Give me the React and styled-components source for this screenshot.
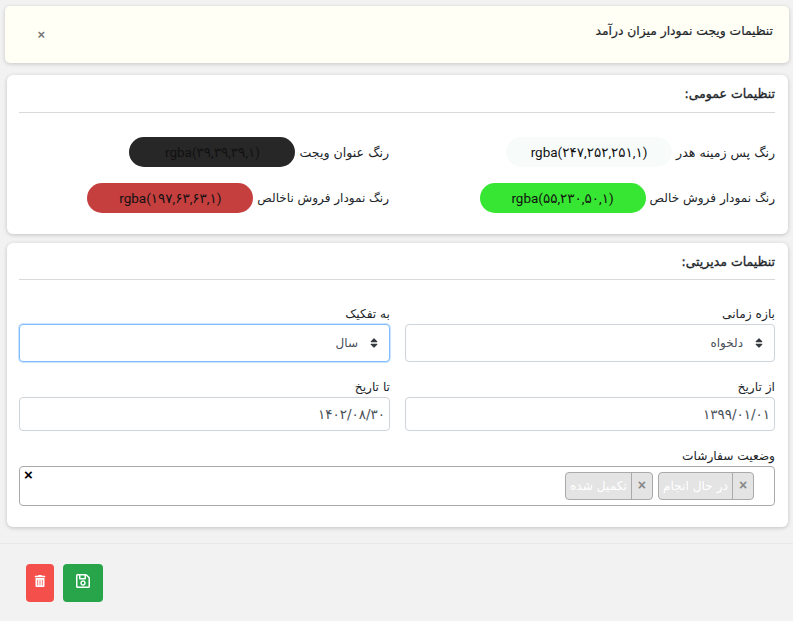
import styled, { createGlobalStyle } from "styled-components";
import { FaRegSave, FaTrashAlt, FaSort } from "react-icons/fa";

const GlobalStyle = createGlobalStyle`
  html, body {
    margin: 0;
    padding: 0;
    background: #f2f2f2;
    font-family: "DejaVu Sans", "Noto Sans", sans-serif;
    color: #212529;
  }
  * { box-sizing: border-box; }
`;

const Page = styled.div`
  width: 793px;
  height: 621px;
  overflow: hidden;
  direction: rtl;
  padding-top: 6px;
`;

const Header = styled.div`
  height: 57px;
  margin: 0 4px 12px 5px;
  padding: 17px 16px 0 16px;
  background: #fffff6;
  border-radius: 5px;
  box-shadow: 0 1px 4px rgba(0, 0, 0, 0.18);
  display: flex;
  justify-content: space-between;
  align-items: flex-start;
`;

const HeaderTitle = styled.h1`
  margin: 0;
  font-size: 12.3px;
  line-height: 16px;
  font-weight: 400;
  -webkit-text-stroke: 0.2px #212529;
  color: #212529;
`;

const CloseIcon = styled.span`
  margin: 5px 0 0 16px;
  width: 8px;
  font-family: "Liberation Sans", sans-serif;
  font-size: 13px;
  line-height: 14px;
  font-weight: 700;
  color: #777;
`;

const Card = styled.section`
  margin: 0 5px ${(p) => p.$gap}px 7px;
  height: ${(p) => p.$height}px;
  padding: 0 13px 0 12px;
  background: #fff;
  border-radius: 6px;
  box-shadow: 0 1px 4px rgba(0, 0, 0, 0.2);
`;

const CardTitle = styled.h2`
  margin: 0;
  height: ${(p) => p.$height}px;
  padding-top: 10px;
  font-size: 12.5px;
  line-height: 18px;
  font-weight: 400;
  -webkit-text-stroke: 0.35px #212529;
  color: #212529;
  border-bottom: 1px solid #d9d9d9;
`;

const ColorGrid = styled.div`
  display: grid;
  grid-template-columns: 370px 370px;
  justify-content: space-between;
  row-gap: 16px;
  padding-top: 24px;
`;

const ColorRow = styled.div`
  display: flex;
  align-items: center;
  gap: 4px;
  height: 30px;
`;

const ColorLabel = styled.span`
  font-size: ${(p) => p.$size}px;
  color: #212529;
  white-space: nowrap;
`;

const ColorPill = styled.div`
  direction: ltr;
  width: 166px;
  height: 30px;
  border-radius: 15px;
  background: ${(p) => p.$bg};
  color: #111;
  font-family: "Roboto", "DejaVu Sans", sans-serif;
  font-size: 13.5px;
  line-height: 30px;
  text-align: center;
`;

const FormGrid = styled.div`
  display: grid;
  grid-template-columns: 370px 371px;
  justify-content: space-between;
  padding-top: 24px;
  row-gap: 15px;
`;

const Field = styled.div`
  display: flex;
  flex-direction: column;
  grid-column: ${(p) => (p.$wide ? "1 / -1" : "auto")};
`;

const FieldLabel = styled.label`
  height: 20px;
  font-size: 12.2px;
  line-height: 20px;
  color: #212529;
`;

const SelectBox = styled.div`
  height: 38px;
  display: flex;
  align-items: center;
  gap: 10px;
  padding-right: 9px;
  background: #fff;
  border: 1px solid ${(p) => (p.$focused ? "#80bdff" : "#ced4da")};
  border-radius: 4px;
  box-shadow: ${(p) => (p.$focused ? "0 0 0 1px rgba(0, 123, 255, 0.2)" : "none")};
  font-size: 12px;
  color: #495057;

  svg {
    width: 12px;
    height: 12px;
    color: #343a40;
  }
`;

const DateInput = styled.div`
  height: 34px;
  display: flex;
  align-items: center;
  padding-right: 4px;
  background: #fff;
  border: 1px solid #ced4da;
  border-radius: 4px;
  font-size: 13.5px;
  color: #495057;
`;

const MultiSelect = styled.div`
  position: relative;
  height: 40px;
  display: flex;
  gap: 5px;
  padding: 5px 20px 0 0;
  background: #fff;
  border: 1px solid #aaa;
  border-radius: 4px;
`;

const Tag = styled.div`
  height: 28px;
  display: flex;
  align-items: center;
  background: #e4e4e4;
  border: 1px solid #aaa;
  border-radius: 4px;
  color: #fff;
  font-size: 12.2px;
  white-space: nowrap;
`;

const TagRemove = styled.span`
  width: 21px;
  height: 100%;
  border-left: 1px solid #aaa;
  font-family: "Liberation Sans", sans-serif;
  font-size: 14px;
  font-weight: 700;
  line-height: 25px;
  text-align: center;
  color: #888;
`;

const TagText = styled.span`
  padding: 0 4px;
`;

const ClearAll = styled.span`
  position: absolute;
  left: 4px;
  top: 0;
  font-family: "Liberation Sans", sans-serif;
  font-size: 15px;
  line-height: 15px;
  font-weight: 700;
  color: #000;
`;

const Footer = styled.footer`
  margin-top: 16px;
  border-top: 1px solid #e8e8e8;
  padding: 20px 0 0 26px;
  display: flex;
  direction: ltr;
  gap: 9px;
`;

const ActionButton = styled.button`
  width: ${(p) => p.$width}px;
  height: 38px;
  padding: 0 0 4px;
  border: none;
  border-radius: 4px;
  background: ${(p) => p.$bg};
  color: #fff;
  display: flex;
  align-items: center;
  justify-content: center;
  font-size: ${(p) => p.$iconSize}px;
`;

const colors = [
  { label: "رنگ پس زمینه هدر", size: 12.6, value: "rgba(۲۴۷,۲۵۲,۲۵۱,۱)", bg: "rgba(247,252,251,1)" },
  { label: "رنگ عنوان ویجت", size: 12.6, value: "rgba(۳۹,۳۹,۳۹,۱)", bg: "rgba(39,39,39,1)" },
  { label: "رنگ نمودار فروش خالص", size: 12.1, value: "rgba(۵۵,۲۳۰,۵۰,۱)", bg: "rgba(55,230,50,1)" },
  { label: "رنگ نمودار فروش ناخالص", size: 12.03, value: "rgba(۱۹۷,۶۳,۶۳,۱)", bg: "rgba(197,63,63,1)" },
];

export default function App() {
  return (
    <Page>
      <GlobalStyle />
      <Header>
        <HeaderTitle>تنظیمات ویجت نمودار میزان درآمد</HeaderTitle>
        <CloseIcon>×</CloseIcon>
      </Header>

      <Card $height={159} $gap={9}>
        <CardTitle $height={38}>تنظیمات عمومی:</CardTitle>
        <ColorGrid>
          {colors.map((c) => (
            <ColorRow key={c.label}>
              <ColorLabel $size={c.size}>{c.label}</ColorLabel>
              <ColorPill $bg={c.bg}>{c.value}</ColorPill>
            </ColorRow>
          ))}
        </ColorGrid>
      </Card>

      <Card $height={284} $gap={0}>
        <CardTitle $height={37}>تنظیمات مدیریتی:</CardTitle>
        <FormGrid>
          <Field>
            <FieldLabel>بازه زمانی</FieldLabel>
            <SelectBox>
              <FaSort />
              دلخواه
            </SelectBox>
          </Field>
          <Field>
            <FieldLabel>به تفکیک</FieldLabel>
            <SelectBox $focused>
              <FaSort />
              سال
            </SelectBox>
          </Field>
          <Field>
            <FieldLabel>از تاریخ</FieldLabel>
            <DateInput>۱۳۹۹/۰۱/۰۱</DateInput>
          </Field>
          <Field>
            <FieldLabel>تا تاریخ</FieldLabel>
            <DateInput>۱۴۰۲/۰۸/۳۰</DateInput>
          </Field>
          <Field $wide>
            <FieldLabel>وضعیت سفارشات</FieldLabel>
            <MultiSelect>
              <Tag>
                <TagRemove>×</TagRemove>
                <TagText>در حال انجام</TagText>
              </Tag>
              <Tag>
                <TagRemove>×</TagRemove>
                <TagText>تکمیل شده</TagText>
              </Tag>
              <ClearAll>×</ClearAll>
            </MultiSelect>
          </Field>
        </FormGrid>
      </Card>

      <Footer>
        <ActionButton $width={28} $bg="#f44f4a" $iconSize={12}>
          <FaTrashAlt />
        </ActionButton>
        <ActionButton $width={40} $bg="#28a54a" $iconSize={16}>
          <FaRegSave />
        </ActionButton>
      </Footer>
    </Page>
  );
}
